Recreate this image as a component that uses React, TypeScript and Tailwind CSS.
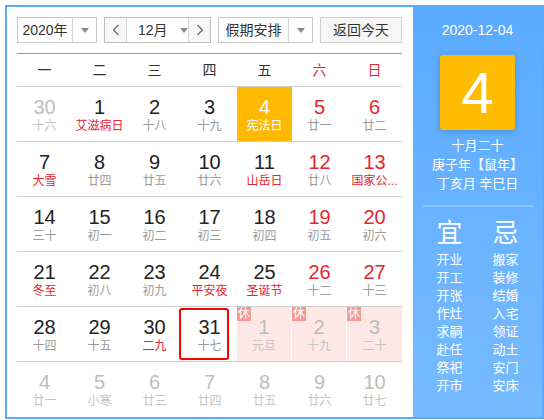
import React from "react";

type Day = { d: number; l: string; o?: boolean; lr?: boolean; today?: boolean; rest?: boolean; sel?: boolean };

const rows: Day[][] = [
  [
    { d: 30, l: "十六", o: true },
    { d: 1, l: "艾滋病日", lr: true },
    { d: 2, l: "十八" },
    { d: 3, l: "十九" },
    { d: 4, l: "宪法日", today: true },
    { d: 5, l: "廿一" },
    { d: 6, l: "廿二" },
  ],
  [
    { d: 7, l: "大雪", lr: true },
    { d: 8, l: "廿四" },
    { d: 9, l: "廿五" },
    { d: 10, l: "廿六" },
    { d: 11, l: "山岳日", lr: true },
    { d: 12, l: "廿八" },
    { d: 13, l: "国家公...", lr: true },
  ],
  [
    { d: 14, l: "三十" },
    { d: 15, l: "初一" },
    { d: 16, l: "初二" },
    { d: 17, l: "初三" },
    { d: 18, l: "初四" },
    { d: 19, l: "初五" },
    { d: 20, l: "初六" },
  ],
  [
    { d: 21, l: "冬至", lr: true },
    { d: 22, l: "初八" },
    { d: 23, l: "初九" },
    { d: 24, l: "平安夜", lr: true },
    { d: 25, l: "圣诞节", lr: true },
    { d: 26, l: "十二" },
    { d: 27, l: "十三" },
  ],
  [
    { d: 28, l: "十四" },
    { d: 29, l: "十五" },
    { d: 30, l: "二九", lr: true },
    { d: 31, l: "十七", sel: true },
    { d: 1, l: "元旦", o: true, rest: true },
    { d: 2, l: "十九", o: true, rest: true },
    { d: 3, l: "二十", o: true, rest: true },
  ],
  [
    { d: 4, l: "廿一", o: true },
    { d: 5, l: "小寒", o: true },
    { d: 6, l: "廿三", o: true },
    { d: 7, l: "廿四", o: true },
    { d: 8, l: "廿五", o: true },
    { d: 9, l: "廿六", o: true },
    { d: 10, l: "廿七", o: true },
  ],
];

const weekdays = ["一", "二", "三", "四", "五", "六", "日"];
const yi = ["开业", "开工", "开张", "作灶", "求嗣", "赴任", "祭祀", "开市"];
const ji = ["搬家", "装修", "结婚", "入宅", "领证", "动土", "安门", "安床"];

const font = { fontFamily: '"Liberation Sans", "Noto Sans CJK SC", sans-serif' };

function Caret() {
  return <span className="block w-0 h-0 border-x-[4px] border-x-transparent border-t-[5px] border-t-[#8a8a8a]" />;
}

function Chevron({ dir }: { dir: "l" | "r" }) {
  return (
    <svg width="8" height="12" viewBox="0 0 8 12" fill="none" stroke="#666" strokeWidth="1.2">
      {dir === "l" ? <polyline points="6.5,1 1.5,6 6.5,11" /> : <polyline points="1.5,1 6.5,6 1.5,11" />}
    </svg>
  );
}

function Cell({ day, col }: { day: Day; col: number }) {
  const weekend = col >= 5;
  let numColor = "text-[#222]";
  let lunColor = "text-[#9a9a9a]";
  if (day.o) {
    numColor = "text-[#bdbdbd]";
    lunColor = "text-[#c4c4c4]";
  } else if (weekend) {
    numColor = "text-[#e5262d]";
  }
  if (!day.o && day.lr) lunColor = "text-[#e5262d]";
  if (day.today) {
    numColor = "text-white";
    lunColor = "text-white";
  }
  const bg = day.today ? "bg-[#ffb900]" : day.rest ? "bg-[#fde8e6]" : "";
  const divider = day.rest && col < 6 ? "border-r border-r-white" : "";
  return (
    <div className={`relative h-[54px] flex flex-col items-center pt-[8px] ${bg} ${divider}`}>
      {day.rest && (
        <span className="absolute left-0 top-0 w-[14px] h-[14px] bg-[#f79891] text-white text-[12px] leading-[14px] text-center">
          休
        </span>
      )}
      {day.sel && (
        <span className="absolute left-[-3px] top-[1px] w-[50px] h-[52px] border-2 border-[#f00] rounded-[3px]" />
      )}
      <span className={`text-[20px] leading-[24px] ${numColor}`}>{day.d}</span>
      <span className={`text-[12px] leading-[14px] whitespace-nowrap ${lunColor}`}>{day.l}</span>
    </div>
  );
}

export default function App() {
  return (
    <div className="pt-[5px] pl-[5px] bg-white" style={font}>
      <div className="flex w-[539px] h-[414px] border-2 border-[#5aabff] overflow-hidden">
        <div className="w-[406px] shrink-0 bg-white pt-[10px] px-[10px]">
          {/* toolbar */}
          <div className="flex items-center h-[26px] gap-[7px] text-[14px] text-[#333]">
            <div className="flex h-[26px] w-[80px] border border-[#c9c9c9] bg-white">
              <div className="flex-1 flex items-center justify-center">2020年</div>
              <div className="w-[24px] border-l border-[#d6d6d6] flex items-center justify-center">
                <Caret />
              </div>
            </div>
            <div className="flex h-[26px] w-[107px] border border-[#bdbdbd]">
              <div className="w-[22px] bg-[#f7f7f7] border-r border-[#d6d6d6] flex items-center justify-center">
                <Chevron dir="l" />
              </div>
              <div className="flex-1 flex items-center bg-white pl-[11px] gap-[12px]">
                <span>12月</span>
                <Caret />
              </div>
              <div className="w-[22px] bg-[#f7f7f7] border-l border-[#d6d6d6] flex items-center justify-center">
                <Chevron dir="r" />
              </div>
            </div>
            <div className="flex h-[26px] w-[95px] border border-[#c9c9c9] bg-white">
              <div className="flex-1 flex items-center justify-center">假期安排</div>
              <div className="w-[24px] border-l border-[#d6d6d6] flex items-center justify-center">
                <Caret />
              </div>
            </div>
            <div className="flex h-[26px] w-[82px] border border-[#cfcfcf] bg-[#f6f6f6] items-center justify-center">
              返回今天
            </div>
          </div>
          <div className="mt-[10px] h-px bg-[#5aabff] w-[385px]" />
          {/* weekdays */}
          <div className="grid grid-cols-7 w-[385px] h-[33px] border-b border-[#cfcfcf] text-[14px]">
            {weekdays.map((w, i) => (
              <div key={w} className={`flex items-center justify-center ${i >= 5 ? "text-[#e5262d]" : "text-[#333]"}`}>
                {w}
              </div>
            ))}
          </div>
          {rows.map((r, ri) => (
            <div
              key={ri}
              className={`grid grid-cols-7 w-[385px] ${ri < 5 ? "border-b border-[#cfcfcf]" : ""}`}
            >
              {r.map((d, ci) => (
                <Cell key={ci} day={d} col={ci} />
              ))}
            </div>
          ))}
        </div>
        <div className="flex-1 bg-gradient-to-b from-[#59aaff] to-[#77bbff] flex flex-col items-center text-white pt-[13px]">
          <div className="text-[14px] leading-[20px]">2020-12-04</div>
          <div className="mt-[15px] w-[75px] h-[75px] bg-[#ffbb00] rounded-[3px] shadow-[0_2px_6px_rgba(0,60,140,0.25)] flex items-center justify-center text-[58px] leading-none">
            4
          </div>
          <div className="mt-[6px] text-[13px] leading-[19px] text-center">
            <div>十月二十</div>
            <div>庚子年【鼠年】</div>
            <div>丁亥月 辛巳日</div>
          </div>
          <div className="mt-[12px] w-[110px] h-[2px] bg-[#8cc6ff]" />
          <div className="mt-[11px] grid grid-cols-2 w-[112px] text-center">
            <div className="text-[26px] leading-[30px]">宜</div>
            <div className="text-[26px] leading-[30px]">忌</div>
            <div className="mt-[3px] text-[13px] leading-[18px]">
              {yi.map((t) => (
                <div key={t}>{t}</div>
              ))}
            </div>
            <div className="mt-[3px] text-[13px] leading-[18px]">
              {ji.map((t) => (
                <div key={t}>{t}</div>
              ))}
            </div>
          </div>
        </div>
      </div>
    </div>
  );
}
